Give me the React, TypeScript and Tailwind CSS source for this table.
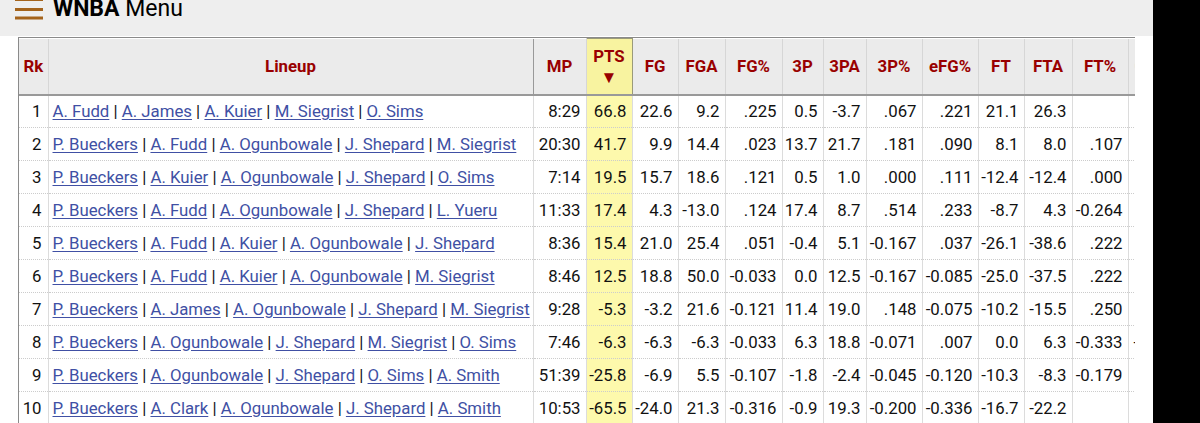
import React from "react";

type Row = {
  rk: number;
  lineup: string[];
  stats: string[];
  extra?: string;
};

const rows: Row[] = [
  { rk: 1, lineup: ["A. Fudd", "A. James", "A. Kuier", "M. Siegrist", "O. Sims"], stats: ["8:29", "66.8", "22.6", "9.2", ".225", "0.5", "-3.7", ".067", ".221", "21.1", "26.3", ""] },
  { rk: 2, lineup: ["P. Bueckers", "A. Fudd", "A. Ogunbowale", "J. Shepard", "M. Siegrist"], stats: ["20:30", "41.7", "9.9", "14.4", ".023", "13.7", "21.7", ".181", ".090", "8.1", "8.0", ".107"] },
  { rk: 3, lineup: ["P. Bueckers", "A. Kuier", "A. Ogunbowale", "J. Shepard", "O. Sims"], stats: ["7:14", "19.5", "15.7", "18.6", ".121", "0.5", "1.0", ".000", ".111", "-12.4", "-12.4", ".000"] },
  { rk: 4, lineup: ["P. Bueckers", "A. Fudd", "A. Ogunbowale", "J. Shepard", "L. Yueru"], stats: ["11:33", "17.4", "4.3", "-13.0", ".124", "17.4", "8.7", ".514", ".233", "-8.7", "4.3", "-0.264"] },
  { rk: 5, lineup: ["P. Bueckers", "A. Fudd", "A. Kuier", "A. Ogunbowale", "J. Shepard"], stats: ["8:36", "15.4", "21.0", "25.4", ".051", "-0.4", "5.1", "-0.167", ".037", "-26.1", "-38.6", ".222"] },
  { rk: 6, lineup: ["P. Bueckers", "A. Fudd", "A. Kuier", "A. Ogunbowale", "M. Siegrist"], stats: ["8:46", "12.5", "18.8", "50.0", "-0.033", "0.0", "12.5", "-0.167", "-0.085", "-25.0", "-37.5", ".222"] },
  { rk: 7, lineup: ["P. Bueckers", "A. James", "A. Ogunbowale", "J. Shepard", "M. Siegrist"], stats: ["9:28", "-5.3", "-3.2", "21.6", "-0.121", "11.4", "19.0", ".148", "-0.075", "-10.2", "-15.5", ".250"] },
  { rk: 8, lineup: ["P. Bueckers", "A. Ogunbowale", "J. Shepard", "M. Siegrist", "O. Sims"], stats: ["7:46", "-6.3", "-6.3", "-6.3", "-0.033", "6.3", "18.8", "-0.071", ".007", "0.0", "6.3", "-0.333"], extra: "-0.500" },
  { rk: 9, lineup: ["P. Bueckers", "A. Ogunbowale", "J. Shepard", "O. Sims", "A. Smith"], stats: ["51:39", "-25.8", "-6.9", "5.5", "-0.107", "-1.8", "-2.4", "-0.045", "-0.120", "-10.3", "-8.3", "-0.179"] },
  { rk: 10, lineup: ["P. Bueckers", "A. Clark", "A. Ogunbowale", "J. Shepard", "A. Smith"], stats: ["10:53", "-65.5", "-24.0", "21.3", "-0.316", "-0.9", "19.3", "-0.200", "-0.336", "-16.7", "-22.2", ""] },
];

const statCols = ["MP", "PTS", "FG", "FGA", "FG%", "3P", "3PA", "3P%", "eFG%", "FT", "FTA", "FT%"];
const colWidths = [
  "w-[53px]", "w-[46px]", "w-[46px]", "w-[47px]", "w-[57px]", "w-[41px]",
  "w-[43px]", "w-[56px]", "w-[56px]", "w-[46px]", "w-[48px]", "w-[56px]",
];

const cellBase =
  "border-r border-b border-solid [border-bottom-style:dotted] border-r-[#dcdcdc] border-b-[#cccccc]";

export default function App() {
  return (
    <div className="flex w-[1200px] h-[423px] overflow-hidden bg-white font-['Roboto',sans-serif]">
      <div className="w-[1153px] flex flex-col">
        {/* top bar, scrolled so its upper part is cut off */}
        <header className="h-[36px] shrink-0 bg-[#eeeeee] overflow-hidden">
          <div className="flex items-start pl-[15px]">
            <svg width="28" height="24" viewBox="0 0 28 24" className="-mt-[2px] shrink-0">
              <rect x="0" y="0" width="28" height="3" fill="#a4631b" />
              <rect x="0" y="10" width="28" height="3" fill="#a4631b" />
              <rect x="0" y="18.5" width="28" height="3" fill="#a4631b" />
            </svg>
            <div className="ml-[10px] -mt-[5px] text-[23px] leading-[28px] text-black">
              <span className="font-bold">WNBA</span> Menu
            </div>
          </div>
        </header>

        <div className="pl-[18px] pt-[1px] flex-1 min-h-0">
          <div className="w-[1117px] h-full overflow-hidden border-l border-t border-[#8a8a8a]">
            <table className="table-fixed border-collapse text-[16.8px] leading-[20px] text-[#111] w-[1165px]">
              <colgroup>
                <col className="w-[29px]" />
                <col className="w-[485px]" />
                {colWidths.map((w, i) => (
                  <col key={i} className={w} />
                ))}
                <col className="w-[56px]" />
              </colgroup>
              <thead>
                <tr className="h-[56px] bg-[#ebebeb] text-[#990000] font-bold">
                  <th className="border-r border-b-2 border-[#d6d6d6] border-b-[#999] text-center">Rk</th>
                  <th className="border-r border-b-2 border-r-[#999] border-b-[#999] text-center">Lineup</th>
                  {statCols.map((c) =>
                    c === "PTS" ? (
                      <th key={c} className="border border-b-2 border-[#9a9a7a] border-b-[#999] bg-[#f8f3a0] text-center leading-[21px] pt-[2px]">
                        PTS
                        <br />
                        <span className="text-[17px]">▼</span>
                      </th>
                    ) : (
                      <th key={c} className="border-r border-b-2 border-[#d6d6d6] border-b-[#999] text-center">{c}</th>
                    )
                  )}
                  <th className="border-b-2 border-b-[#999] text-left pl-[6px] text-[#bbbbbb]">ORB</th>
                </tr>
              </thead>
              <tbody>
                {rows.map((r) => (
                  <tr key={r.rk} className="h-[33px]">
                    <td className={`${cellBase} text-right pr-[6px]`}>{r.rk}</td>
                    <td className={`${cellBase} border-r-[#a0a0a0] pl-[4px] whitespace-nowrap`}>
                      {r.lineup.map((p, i) => (
                        <React.Fragment key={i}>
                          {i > 0 && <span className="text-[#111]"> | </span>}
                          <a href="#" className="text-[#4050a4] underline underline-offset-2">
                            {p}
                          </a>
                        </React.Fragment>
                      ))}
                    </td>
                    {r.stats.map((s, i) => (
                      <td
                        key={i}
                        className={`${cellBase} text-right pr-[5px] whitespace-nowrap ${i === 1 ? "bg-[#fdf9ac]" : ""}`}
                      >
                        {s}
                      </td>
                    ))}
                    <td className="border-b border-solid [border-bottom-style:dotted] border-b-[#cccccc] text-left pl-[5px] whitespace-nowrap">
                      {r.extra ?? ""}
                    </td>
                  </tr>
                ))}
              </tbody>
            </table>
          </div>
        </div>
      </div>
      <div className="flex-1 bg-black" />
    </div>
  );
}
